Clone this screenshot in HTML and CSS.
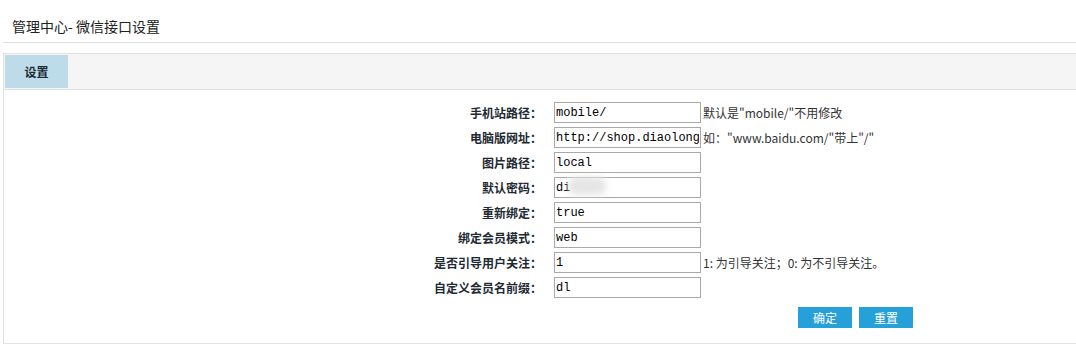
FILE: index.html
```html
<!DOCTYPE html>
<html lang="zh-CN">
<head>
  <meta charset="UTF-8">
  <title>管理中心- 微信接口设置</title>
  <link rel="stylesheet" href="styles.css">
</head>
<body>
  <div class="page-title">管理中心- 微信接口设置</div>

  <div class="panel">
    <div class="tab-bar">
      <div class="tab">设置</div>
    </div>

    <form class="settings-form">
      <label class="field-label" for="mobile">手机站路径：</label>
      <div class="field"><input id="mobile" type="text" value="mobile/"><span class="hint">默认是"mobile/"不用修改</span></div>

      <label class="field-label" for="pcurl">电脑版网址：</label>
      <div class="field"><input id="pcurl" type="text" value="http://shop.diaolong.com/"><span class="hint">如："www.baidu.com/"带上"/"</span></div>

      <label class="field-label" for="imgpath">图片路径：</label>
      <div class="field"><input id="imgpath" type="text" value="local"></div>

      <label class="field-label" for="pwd">默认密码：</label>
      <div class="field"><input id="pwd" type="text" value="di"><span class="blur"></span></div>

      <label class="field-label" for="rebind">重新绑定：</label>
      <div class="field"><input id="rebind" type="text" value="true"></div>

      <label class="field-label" for="bindmode">绑定会员模式：</label>
      <div class="field"><input id="bindmode" type="text" value="web"></div>

      <label class="field-label" for="follow">是否引导用户关注：</label>
      <div class="field"><input id="follow" type="text" value="1"><span class="hint">1: 为引导关注；0: 为不引导关注。</span></div>

      <label class="field-label" for="prefix">自定义会员名前缀：</label>
      <div class="field"><input id="prefix" type="text" value="dl"></div>

      <div class="actions">
        <button type="button" class="btn">确定</button>
        <button type="reset" class="btn">重置</button>
      </div>
    </form>
  </div>
</body>
</html>
```

FILE: styles.css
```css
/* Global */
* {
  margin: 0;
  padding: 0;
  box-sizing: border-box;
}

body {
  font-family: "Noto Sans CJK SC", "Liberation Sans", sans-serif;
  font-size: 12px;
  color: #333;
  background: #fff;
  overflow: hidden;
}

.page-title {
  margin-left: 3px;
  height: 43px;
  padding: 18px 0 0 9px;
  font-size: 14px;
  line-height: 16px;
  color: #222;
  border-bottom: 1px solid #dedede;
}

.panel {
  margin: 10px 0 0 3px;
  width: 1090px;
  height: 291px;
  border: 1px solid #e2e2e2;
}

.tab-bar {
  background: #f5f5f5;
  padding: 1px 0 1px 1px;
  border-bottom: 1px solid #e2e2e2;
}

.tab {
  width: 63px;
  height: 33px;
  line-height: 33px;
  text-align: center;
  background: #bddbe8;
  color: #1b2a33;
  font-weight: bold;
}

.settings-form {
  display: grid;
  grid-template-columns: 538px 1fr;
  grid-auto-rows: 25px;
  padding-top: 10px;
}

.field-label {
  text-align: right;
  font-weight: bold;
  color: #1e2a33;
  line-height: 25px;
}

.field {
  display: flex;
  align-items: center;
  padding-left: 12px;
  position: relative;
}

.field input {
  width: 147px;
  height: 21px;
  border: 1px solid #a9a9a9;
  padding: 0 1px;
  font-family: "Liberation Mono", monospace;
  font-size: 12px;
  color: #000;
  outline: none;
  background: #fff;
}

.hint {
  margin-left: 2px;
  white-space: nowrap;
  color: #333;
}

/* masked value in the password field */
.blur {
  position: absolute;
  left: 26px;
  top: 2px;
  width: 38px;
  height: 18px;
  border-radius: 8px;
  background: #e6e6e6;
  filter: blur(3px);
}

.actions {
  grid-column: 2;
  display: flex;
  gap: 7px;
  padding: 7px 0 0 256px;
  height: 35px;
}

.btn {
  width: 54px;
  height: 21px;
  border: none;
  background: #26a0d8;
  color: #fff;
  font-family: "Noto Sans CJK SC", sans-serif;
  font-size: 12px;
  cursor: pointer;
}
```
